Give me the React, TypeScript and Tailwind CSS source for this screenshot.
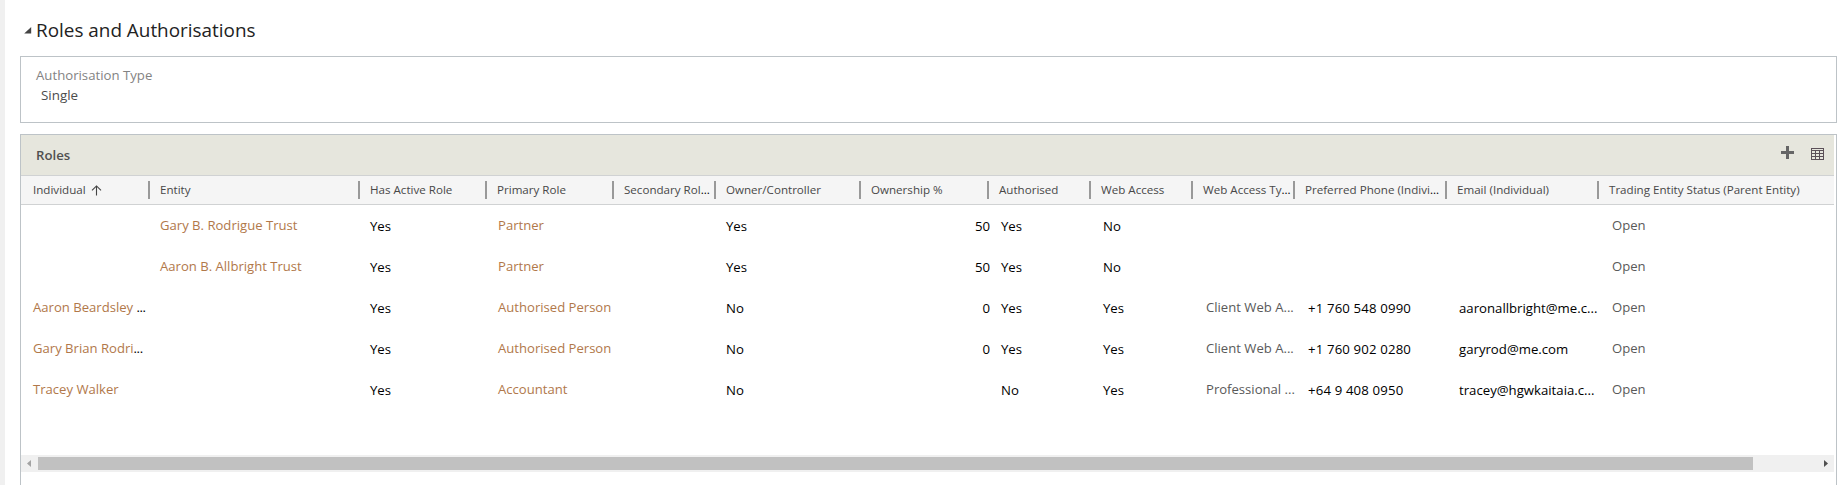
import React from "react";

type Kind = "text" | "link" | "muted" | "number" | "phone";

interface Column {
  label: string;
  head: string;
  cell: string;
  kind: Kind;
  sorted?: boolean;
  more?: boolean;
}

const columns: Column[] = [
  { label: "Individual", head: "w-[129px] pl-3", cell: "w-[129px] pl-3", kind: "link", sorted: true },
  { label: "Entity", head: "w-[210px] pl-2.5", cell: "w-[210px] pl-2.5", kind: "link" },
  { label: "Has Active Role", head: "w-[127px] pl-2.5", cell: "w-[128px] pl-2.5", kind: "text" },
  { label: "Primary Role", head: "w-[127px] pl-2.5", cell: "w-[128px] pl-2.5", kind: "link" },
  { label: "Secondary Rol", head: "w-[102px] pl-2.5", cell: "w-[100px] pl-2.5", kind: "text", more: true },
  { label: "Owner/Controller", head: "w-[145px] pl-2.5", cell: "w-[147px] pl-2.5", kind: "text" },
  { label: "Ownership %", head: "w-[128px] pl-2.5", cell: "w-[128px] pr-px", kind: "number" },
  { label: "Authorised", head: "w-[102px] pl-2.5", cell: "w-[102px] pl-2.5", kind: "text" },
  { label: "Web Access", head: "w-[102px] pl-2.5", cell: "w-[103px] pl-2.5", kind: "text" },
  { label: "Web Access Ty", head: "w-[102px] pl-2.5", cell: "w-[102px] pl-2.5", kind: "muted", more: true },
  { label: "Preferred Phone (Indivi", head: "w-[152px] pl-2.5", cell: "w-[151px] pl-2.5", kind: "phone", more: true },
  { label: "Email (Individual)", head: "w-[152px] pl-2.5", cell: "w-[153px] pl-2.5", kind: "text" },
  { label: "Trading Entity Status (Parent Entity)", head: "w-[235px] pl-2.5", cell: "w-[232px] pl-2.5", kind: "muted" },
];

const rows: string[][] = [
  ["", "Gary B. Rodrigue Trust", "Yes", "Partner", "", "Yes", "50", "Yes", "No", "", "", "", "Open"],
  ["", "Aaron B. Allbright Trust", "Yes", "Partner", "", "Yes", "50", "Yes", "No", "", "", "", "Open"],
  ["Aaron Beardsley ...", "", "Yes", "Authorised Person", "", "No", "0", "Yes", "Yes", "Client Web A...", "+1 760 548 0990", "aaronallbright@me.c...", "Open"],
  ["Gary Brian Rodri...", "", "Yes", "Authorised Person", "", "No", "0", "Yes", "Yes", "Client Web A...", "+1 760 902 0280", "garyrod@me.com", "Open"],
  ["Tracey Walker", "", "Yes", "Accountant", "", "No", "", "No", "Yes", "Professional ...", "+64 9 408 0950", "tracey@hgwkaitaia.c...", "Open"],
];

const kindClass: Record<Kind, string> = {
  text: "pt-[11px] text-[13.2px] text-black",
  phone: "pt-[11px] text-[13.2px] tracking-[0.15px] text-black",
  number: "pt-[11px] text-right text-[13.2px] text-black",
  link: "pt-2.5 text-[13.1px] text-[#b1784a]",
  muted: "pt-2.5 text-[13.1px] text-[#595959]",
};

function Cell({ column, value }: { column: Column; value: string }) {
  const cut = column.kind === "link" && value.endsWith("...");
  return (
    <div className={`shrink-0 whitespace-pre leading-5 ${column.cell} ${kindClass[column.kind]}`}>
      {cut ? value.slice(0, -3) : value}
      {cut && <span className="tracking-[-0.4px] text-black">...</span>}
    </div>
  );
}

function SortArrow() {
  return (
    <svg className="ml-[5px] mt-px" width="11" height="11" viewBox="0 0 11 11" fill="none" stroke="#444" strokeWidth="1.1">
      <path d="M5.5 10.5V1M1 5.3L5.5 0.9L10 5.3" />
    </svg>
  );
}

function GridIcon() {
  return (
    <svg width="13" height="12" viewBox="0 0 13 12" fill="none" stroke="#5b5058" shapeRendering="crispEdges">
      <path d="M0.5 0.5H12.5V11.5H0.5ZM0 2.5H13M0 5.5H13M0 8.5H13M4.5 3V12M8.5 3V12" />
    </svg>
  );
}

export default function App() {
  return (
    <div className="flex h-[485px] w-[1843px] overflow-hidden bg-white font-['Open_Sans','Noto_Sans',sans-serif]">
      <div className="w-[5px] shrink-0 bg-[#f0f0f0]" />
      <main className="ml-[15px] flex w-[1817px] shrink-0 flex-col">
        <div className="flex h-14 shrink-0 items-start pl-1 pt-4">
          <svg className="mt-[11px]" width="8" height="7" viewBox="0 0 8 7" fill="#444">
            <path d="M7.2 0V6.5H0.2Z" />
          </svg>
          <h1 className="ml-1 whitespace-nowrap text-[18.9px] leading-7 text-[#222]">Roles and Authorisations</h1>
        </div>

        <section className="h-[67px] shrink-0 border border-[#bdc3c7] pl-[15px] pt-2">
          <div className="text-[13.2px] leading-5 text-[#838383]">Authorisation Type</div>
          <div className="pl-[5px] text-[13.4px] leading-5 text-[#4c4c4c]">Single</div>
        </section>

        <section className="mt-[11px] flex grow flex-col border border-b-0 border-[#bdc3c7] pr-0.5">
          <header className="flex h-[41px] shrink-0 border-b border-[#d0d2d3] bg-[#e6e6dd]">
            <h2 className="grow pl-[15px] pt-2.5 text-[13.2px] font-semibold leading-5 text-[#505050]">Roles</h2>
            <svg className="mt-[11px]" width="13" height="13" viewBox="0 0 13 13" fill="#666" shapeRendering="crispEdges">
              <path d="M5 0H8V5H13V8H8V13H5V8H0V5H5Z" />
            </svg>
            <div className="ml-[17px] mr-2.5 mt-[13px]">
              <GridIcon />
            </div>
          </header>

          <div className="flex h-[29px] shrink-0 border-b border-[#d0d2d3] bg-[#f5f5f5] pt-[5px]">
            {columns.map((c, i) => (
              <div
                key={c.label}
                className={`flex h-[18px] shrink-0 items-center whitespace-nowrap text-[11.6px] font-medium leading-[18px] text-[#484848] ${c.head} ${
                  i < columns.length - 1 ? "border-r-2 border-[#999]" : ""
                }`}
              >
                <span>{c.label}</span>
                {c.more && <span className="text-black">...</span>}
                {c.sorted && <SortArrow />}
              </div>
            ))}
          </div>

          <div className="h-[250px] shrink-0">
            {rows.map((row, r) => (
              <div key={r} className="flex h-[41px]">
                {columns.map((c, i) => (
                  <Cell key={c.label} column={c} value={row[i]} />
                ))}
              </div>
            ))}
          </div>

          <div className="flex h-[17px] shrink-0 items-center justify-between bg-[#f0f0f0]">
            <div className="flex items-center">
              <svg className="ml-1.5 mr-[7px]" width="4" height="7" viewBox="0 0 4 7" fill="#a3a3a3">
                <path d="M4 0V7L0 3.5Z" />
              </svg>
              <div className="h-[13px] w-[1715px] bg-[#c1c1c1]" />
            </div>
            <svg className="mr-1.5" width="4" height="7" viewBox="0 0 4 7" fill="#505050">
              <path d="M0 0V7L4 3.5Z" />
            </svg>
          </div>
        </section>
      </main>
    </div>
  );
}
